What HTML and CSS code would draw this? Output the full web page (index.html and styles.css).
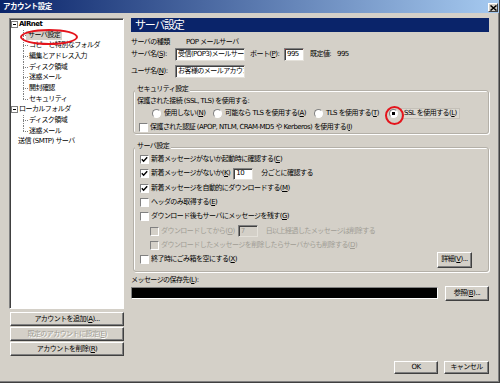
FILE: index.html
```html
<!DOCTYPE html>
<html lang="ja">
<head>
<meta charset="utf-8">
<title>アカウント設定</title>
<link rel="stylesheet" href="styles.css">
</head>
<body>
<div class="window">
  <div class="titlebar">
    <span class="title">アカウント設定</span>
    <span class="close"><svg width="7" height="6" viewBox="0 0 7 6"><path d="M0.5 0.5 L6.5 5.5 M6.5 0.5 L0.5 5.5" stroke="#000" stroke-width="1.5"/></svg></span>
  </div>
  <div class="main">
    <div class="left">
      <div class="tree">
        <div class="node top"><span class="twisty"></span><b>AIRnet</b></div>
        <div class="node child"><span class="conn"></span><span class="sel mark mark-tree">サーバ設定</span></div>
        <div class="node child"><span class="conn"></span><span>コピーと特別なフォルダ</span></div>
        <div class="node child"><span class="conn"></span><span>編集とアドレス入力</span></div>
        <div class="node child"><span class="conn"></span><span>ディスク領域</span></div>
        <div class="node child"><span class="conn"></span><span>迷惑メール</span></div>
        <div class="node child"><span class="conn"></span><span>開封確認</span></div>
        <div class="node child"><span class="conn last"></span><span>セキュリティ</span></div>
        <div class="node top"><span class="twisty"></span><span>ローカルフォルダ</span></div>
        <div class="node child"><span class="conn"></span><span>ディスク領域</span></div>
        <div class="node child"><span class="conn last"></span><span>迷惑メール</span></div>
        <div class="node top plain"><span>送信 (SMTP) サーバ</span></div>
      </div>
      <div class="lbtns">
        <div class="btn"><span>アカウントを追加(<u>A</u>)...</span></div>
        <div class="btn dis"><span>既定のアカウントに設定(<u>E</u>)</span></div>
        <div class="btn"><span>アカウントを削除(<u>R</u>)</span></div>
      </div>
    </div>
    <div class="right">
      <div class="header">サーバ設定</div>
      <div class="type"><span class="lbl">サーバの種類</span><span class="val">POP メールサーバ</span></div>
      <div class="row">
        <span class="lbl">サーバ名(<u>S</u>):</span>
        <span class="input w70"><span>受信(POP3)メールサーバ</span></span>
        <span class="lbl2">ポート(<u>P</u>):</span>
        <span class="input port mark mark-port"><span>995</span></span>
        <span class="lbl3">既定値:</span>
        <span>995</span>
      </div>
      <div class="row user">
        <span class="lbl">ユーザ名(<u>N</u>):</span>
        <span class="input w70"><span>お客様のメールアカウント</span></span>
      </div>

      <div class="group sec">
        <span class="legend">セキュリティ設定</span>
        <div class="line"><span>保護された接続 (SSL, TLS) を使用する:</span></div>
        <div class="radios">
          <span class="ritem"><span class="radio"></span><span>使用しない(<u>N</u>)</span></span>
          <span class="ritem"><span class="radio"></span><span>可能なら TLS を使用する(<u>A</u>)</span></span>
          <span class="ritem"><span class="radio"></span><span>TLS を使用する(<u>T</u>)</span></span>
          <span class="ritem"><span class="radio on mark mark-radio"></span><span class="focus">SSL を使用する(<u>L</u>)</span></span>
        </div>
        <div class="ck"><span class="cb"></span><span>保護された認証 (APOP, NTLM, CRAM-MD5 や Kerberos) を使用する(<u>I</u>)</span></div>
      </div>

      <div class="group srv">
        <span class="legend">サーバ設定</span>
        <div class="rows">
          <div class="srow"><span class="cb on"><svg width="7" height="7" viewBox="0 0 7 7"><path d="M0.8 3.2 L2.6 5.2 L6.2 1.2" fill="none" stroke="#000" stroke-width="1.4"/></svg></span><span>新着メッセージがないか起動時に確認する(<u>C</u>)</span></div>
          <div class="srow"><span class="cb on"><svg width="7" height="7" viewBox="0 0 7 7"><path d="M0.8 3.2 L2.6 5.2 L6.2 1.2" fill="none" stroke="#000" stroke-width="1.4"/></svg></span><span>新着メッセージがないか(<u>K</u>)</span><span class="input num"><span>10</span></span><span class="after">分ごとに確認する</span></div>
          <div class="srow"><span class="cb on"><svg width="7" height="7" viewBox="0 0 7 7"><path d="M0.8 3.2 L2.6 5.2 L6.2 1.2" fill="none" stroke="#000" stroke-width="1.4"/></svg></span><span>新着メッセージを自動的にダウンロードする(<u>M</u>)</span></div>
          <div class="srow"><span class="cb"></span><span>ヘッダのみ取得する(<u>E</u>)</span></div>
          <div class="srow"><span class="cb"></span><span>ダウンロード後もサーバにメッセージを残す(<u>G</u>)</span></div>
          <div class="srow sub dis"><span class="cb"></span><span>ダウンロードしてから(<u>O</u>)</span><span class="input num disin"><span>7</span></span><span class="after">日以上経過したメッセージは削除する</span></div>
          <div class="srow sub dis"><span class="cb"></span><span>ダウンロードしたメッセージを削除したらサーバからも削除する(<u>D</u>)</span></div>
          <div class="srow"><span class="cb"></span><span>終了時にごみ箱を空にする(<u>X</u>)</span><span class="btn detail"><span>詳細(<u>V</u>)...</span></span></div>
        </div>
      </div>

      <div class="pathlabel"><span>メッセージの保存先(<u>L</u>):</span></div>
      <div class="pathrow">
        <span class="path"></span>
        <span class="btn browse"><span>参照(<u>B</u>)...</span></span>
      </div>
    </div>
  </div>
  <div class="footer">
    <span class="btn ok">OK</span>
    <span class="btn cancel">キャンセル</span>
  </div>
</div>
</body>
</html>
```
FILE: styles.css
```css
* { box-sizing: border-box; }
html, body { margin: 0; padding: 0; }
body {
  width: 500px;
  height: 383px;
  overflow: hidden;
  background: #d4d0c8;
  font-family: "DejaVu Sans", "Noto Sans CJK JP", sans-serif;
  font-size: 7px;
  letter-spacing: -0.55px;
  line-height: 1;
  color: #000;
}
u { text-decoration: underline; text-underline-offset: 1px; }

.window {
  width: 500px;
  height: 383px;
  display: flex;
  flex-direction: column;
  background: #d4d0c8;
  border-right: 1px solid #404040;
  border-bottom: 1px solid #404040;
  box-shadow: inset -1px -1px #808080;
}

.titlebar {
  height: 13px;
  flex: none;
  display: flex;
  align-items: center;
  justify-content: space-between;
  padding: 0 1px 0 3px;
  background: linear-gradient(to right, #0a246a, #a6caf0);
  color: #fff;
  font-weight: bold;
  font-size: 7.5px;
}
.close {
  width: 10px;
  height: 9px;
  margin-top: 2px;
  display: flex;
  align-items: center;
  justify-content: center;
  background: #d4d0c8;
  border: 1px solid;
  border-color: #fff #404040 #404040 #fff;
}

.main {
  display: flex;
  gap: 7px;
  padding: 5px 10px 0 9px;
}

/* left column */
.left { width: 115px; display: flex; flex-direction: column; }
.tree {
  height: 291px;
  background: #fff;
  border: 1px solid;
  border-color: #808080 #fff #fff #808080;
  box-shadow: inset 1px 1px #404040;
}
.node {
  height: 10.7px;
  display: flex;
  align-items: center;
  white-space: nowrap;
}
.node.top { padding-left: 1px; }
.node.top.plain { padding-left: 8px; }
.twisty {
  width: 7px;
  height: 7px;
  flex: none;
  margin-right: 1px;
  border: 1px solid #808080;
  background: #fff linear-gradient(#000, #000) center / 3px 1px no-repeat;
}
.conn {
  width: 5px;
  flex: none;
  align-self: stretch;
  margin-left: 13px;
  margin-right: 1px;
  background:
    repeating-linear-gradient(to bottom, #808080 0 1px, transparent 1px 2px) left top / 1px 100% no-repeat,
    repeating-linear-gradient(to right, #808080 0 1px, transparent 1px 2px) left center / 100% 1px no-repeat;
}
.conn.last {
  background:
    repeating-linear-gradient(to bottom, #808080 0 1px, transparent 1px 2px) left top / 1px 50% no-repeat,
    repeating-linear-gradient(to right, #808080 0 1px, transparent 1px 2px) left center / 100% 1px no-repeat;
}
.sel { background: #d4d0c8; padding: 1px 2px; margin-left: -3px; }

.lbtns {
  display: flex;
  flex-direction: column;
  gap: 1px;
  margin-top: 3px;
  padding-left: 1px;
}

.btn {
  height: 14px;
  display: flex;
  align-items: center;
  justify-content: center;
  background: #d4d0c8;
  border: 1px solid;
  border-color: #fff #404040 #404040 #fff;
  box-shadow: inset -1px -1px #808080;
  white-space: nowrap;
}
.btn.dis { color: #a09d95; text-shadow: 1px 1px #fff; }

/* right column */
.right { width: 358px; display: flex; flex-direction: column; }
.header {
  height: 14px;
  display: flex;
  align-items: center;
  padding-left: 4px;
  background: #0a246a;
  color: #fff;
  font-size: 11px;
  letter-spacing: -1.3px;
}
.type { height: 12px; margin-top: 4px; display: flex; align-items: center; }
.lbl { width: 44px; flex: none; white-space: nowrap; }
.val { margin-left: 11px; }
.row { height: 13px; display: flex; align-items: center; white-space: nowrap; }
.row.user { margin-top: 4px; }
.input {
  height: 13px;
  flex: none;
  display: flex;
  align-items: center;
  padding: 0 2px;
  overflow: hidden;
  white-space: nowrap;
  background: #fff;
  border: 1px solid;
  border-color: #808080 #e4e1da #e4e1da #808080;
  box-shadow: inset 1px 1px #404040;
}
.w70 { width: 70px; }
.lbl2 { margin-left: 5px; width: 34px; }
.port { width: 20px; }
.lbl3 { margin-left: 6px; width: 27px; }

.mark { position: relative; }
.mark::after {
  content: "";
  position: absolute;
  border: 2px solid #e4141c;
  border-radius: 50%;
  pointer-events: none;
}
.mark-port::after { left: -8px; top: -3px; width: 31px; height: 17px; }
.mark-tree::after { left: -6px; top: -2px; width: 54px; height: 12px; }
.mark-radio::after { left: -5px; top: -4px; width: 15px; height: 15px; }

.group {
  margin-left: 2px;
  display: flex;
  flex-direction: column;
  padding: 0 3px;
  border: 1px solid #b4b0a8;
  border-radius: 3px;
  box-shadow: 1px 1px #fff, inset 1px 1px #fff;
}
.legend {
  align-self: flex-start;
  height: 10px;
  margin-top: -7px;
  margin-left: -2px;
  padding: 0 2px;
  display: flex;
  align-items: center;
  background: #d4d0c8;
}
.sec { margin-top: 12px; }
.sec .line { height: 10px; margin-top: 2px; display: flex; align-items: center; }
.radios {
  display: grid;
  grid-template-columns: 61px 101px 75px auto;
  align-items: center;
  height: 12px;
  margin-top: 1px;
  padding-left: 15px;
  white-space: nowrap;
}
.ritem { display: flex; align-items: center; gap: 3px; }
.radio {
  width: 9px;
  height: 9px;
  flex: none;
  border-radius: 50%;
  border: 1px solid;
  border-color: #808080 #fff #fff #808080;
  background: #fff;
}
.radio.on { background: radial-gradient(circle, #000 0 1.5px, #fff 2px); }
.focus { padding: 1px 2px; background: #dcd8d0; border: 1px solid #c4c0b8; }
.ck {
  height: 12px;
  margin-top: 2px;
  padding-left: 2px;
  display: flex;
  align-items: center;
  white-space: nowrap;
}
.cb {
  width: 9px;
  height: 9px;
  flex: none;
  margin-right: 2px;
  display: flex;
  align-items: center;
  justify-content: center;
  background: #fff;
  border: 1px solid;
  border-color: #808080 #fff #fff #808080;
}

.srv { margin-top: 13px; padding-bottom: 4px; }
.rows { padding-top: 1.5px; }
.srow {
  height: 14.3px;
  display: flex;
  align-items: center;
  padding-left: 3px;
  white-space: nowrap;
}
.srow.sub { padding-left: 13px; }
.srow.dis { color: #a09d95; }
.srow.dis .cb { background: #d4d0c8; }
.num { width: 20px; height: 12px; margin-left: 3px; }
.disin { background: #d4d0c8; color: #a09d95; }
.after { margin-left: 8px; }
.detail { margin-left: auto; margin-right: 13px; width: 35px; height: 16px; }

.pathlabel { height: 10px; margin-top: 4px; display: flex; align-items: center; }
.pathrow { display: flex; align-items: center; height: 15px; }
.path {
  width: 307px;
  height: 12px;
  background: #000;
  border: 1px solid;
  border-color: #808080 #fff #fff #808080;
}
.browse { width: 44px; height: 15px; margin-left: 7px; }

.footer {
  display: flex;
  justify-content: flex-end;
  gap: 6px;
  margin-top: 5px;
  padding-right: 10px;
}
.ok { width: 44px; height: 13px; }
.cancel { width: 45px; height: 13px; }
```
